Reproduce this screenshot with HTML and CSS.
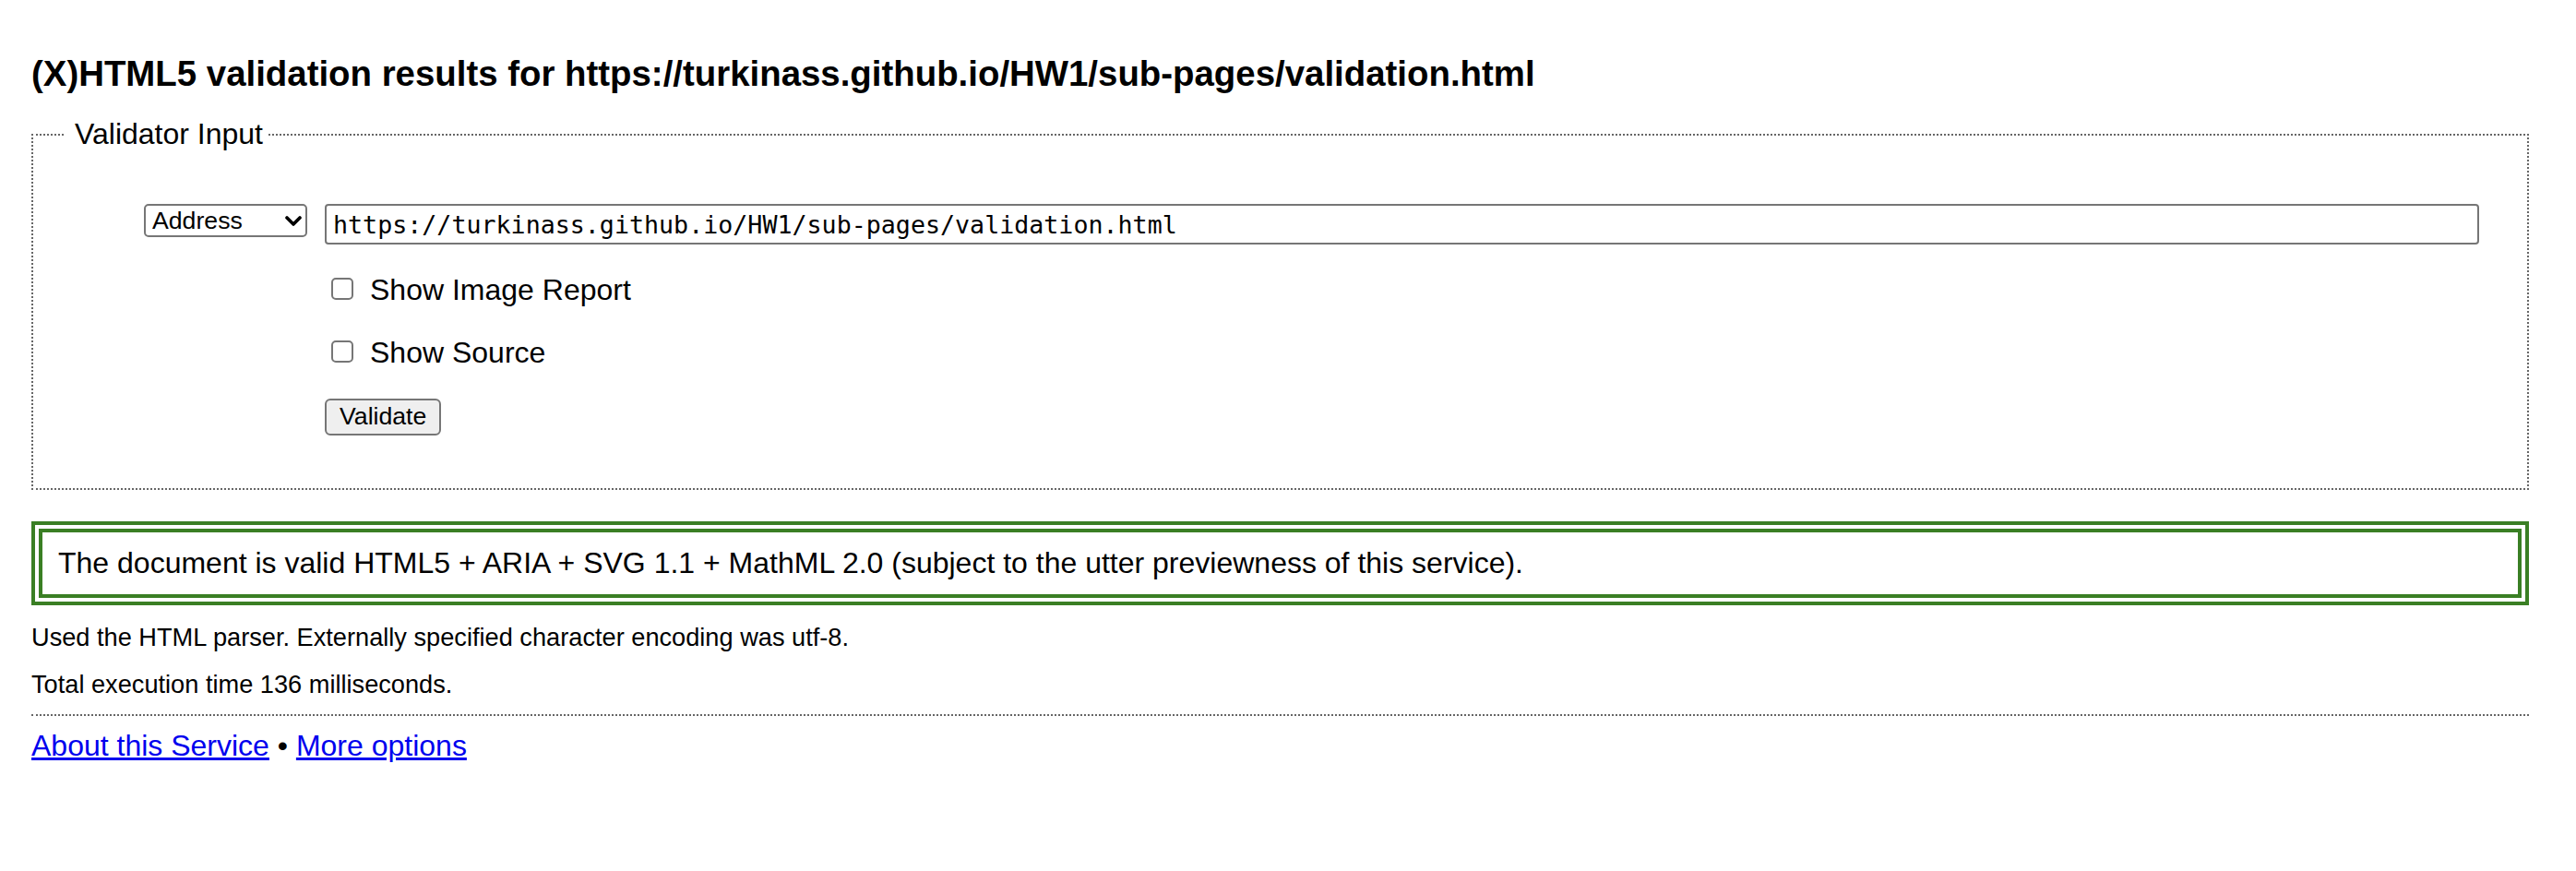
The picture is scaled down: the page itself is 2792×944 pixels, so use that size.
FILE: index.html
```html
<!DOCTYPE html>
<html lang="en">
<head>
<meta charset="utf-8">
<title>Validation results</title>
<link rel="stylesheet" href="styles.css">
</head>
<body>
<h2 class="title">(X)HTML5 validation results for https://turkinass.github.io/HW1/sub-pages/validation.html</h2>
<form class="form">
  <fieldset class="input-set">
    <legend class="legend">Validator Input</legend>
    <div class="grid">
      <div class="select-wrap">
        <select class="select"><option>Address</option></select>
        <svg class="chevron" width="18" height="11" viewBox="0 0 18 11"><path d="M2 2 L9 9 L16 2" fill="none" stroke="#000" stroke-width="3.6" stroke-linecap="round" stroke-linejoin="round"/></svg>
      </div>
      <input class="url" type="text" value="https://turkinass.github.io/HW1/sub-pages/validation.html">
      <label class="check"><input type="checkbox" class="box">Show Image Report</label>
      <label class="check"><input type="checkbox" class="box">Show Source</label>
      <div class="actions"><button class="btn" type="button">Validate</button></div>
    </div>
  </fieldset>
</form>
<p class="success">The document is valid HTML5 + ARIA + SVG 1.1 + MathML 2.0 (subject to the utter previewness of this service).</p>
<p class="details">Used the HTML parser. Externally specified character encoding was utf-8.</p>
<p class="details">Total execution time 136 milliseconds.</p>
<hr class="rule">
<p class="links"><a class="link" href="#">About this Service</a> • <a class="link" href="#">More options</a></p>
</body>
</html>
```

FILE: styles.css
```css
html, body {
  background: #fff;
}
body {
  margin: 0;
  padding: 0 51px 40px 34px;
  font-family: "Liberation Sans", Arial, sans-serif;
  font-size: 32px;
  color: #000;
}
.title {
  margin: 58px 0 25px;
  font-size: 38.4px;
  font-weight: bold;
  line-height: normal;
}
.form {
  margin: 0;
}
.input-set {
  margin: 0;
  border: 2px dotted #666;
  padding: 57px 52px 57px 24px;
  min-width: 0;
}
.legend {
  margin-left: 11px;
  padding: 0 4px 0 10px;
  font-size: 32px;
  line-height: normal;
}
.grid {
  display: grid;
  grid-template-columns: 292px 1fr;
  row-gap: 31px;
  align-items: start;
}
.select-wrap {
  position: relative;
  justify-self: end;
  margin-right: 19px;
  width: 177px;
  height: 36px;
}
.select {
  appearance: none;
  -webkit-appearance: none;
  display: block;
  box-sizing: border-box;
  width: 100%;
  height: 36px;
  margin: 0;
  padding: 0 0 0 7px;
  border: 2px solid #767676;
  border-radius: 5px;
  background: #fff;
  color: #000;
  font-family: "Liberation Sans", Arial, sans-serif;
  font-size: 26.67px;
}
.chevron {
  position: absolute;
  right: 6px;
  top: 13px;
  pointer-events: none;
}
.url {
  grid-column: 2;
  box-sizing: border-box;
  width: 100%;
  height: 44px;
  margin: 0;
  padding: 0 7px;
  border: 2px solid #767676;
  border-radius: 4px;
  background: #fff;
  color: #000;
  font-family: "DejaVu Sans Mono", "Liberation Mono", monospace;
  font-size: 26.67px;
}
.check {
  grid-column: 2;
  display: flex;
  align-items: center;
  line-height: normal;
  font-size: 32px;
}
.box {
  appearance: none;
  -webkit-appearance: none;
  box-sizing: border-box;
  width: 24px;
  height: 24px;
  margin: 0 18px 3px 7px;
  border: 2px solid #767676;
  border-radius: 5px;
  background: #fff;
  flex: none;
}
.actions {
  grid-column: 2;
  margin-top: -1px;
}
.btn {
  box-sizing: border-box;
  height: 40px;
  margin: 0;
  padding: 0 14px;
  border: 2px solid #767676;
  border-radius: 6px;
  background: #efefef;
  color: #000;
  font-family: "Liberation Sans", Arial, sans-serif;
  font-size: 26.67px;
}
.success {
  margin: 34px 0 0;
  border: 12px double #3a7f24;
  padding: 15px 17px;
  font-size: 32px;
  line-height: normal;
}
.details {
  margin: 19px 0 0;
  font-size: 27.2px;
  line-height: normal;
}
.rule {
  height: 0;
  margin: 16px 0 0;
  border: 0;
  border-top: 2px dotted #666;
}
.links {
  margin: 14px 0 0;
  font-size: 32px;
  line-height: normal;
}
.link {
  color: #0000ee;
  text-decoration: underline;
}
```
